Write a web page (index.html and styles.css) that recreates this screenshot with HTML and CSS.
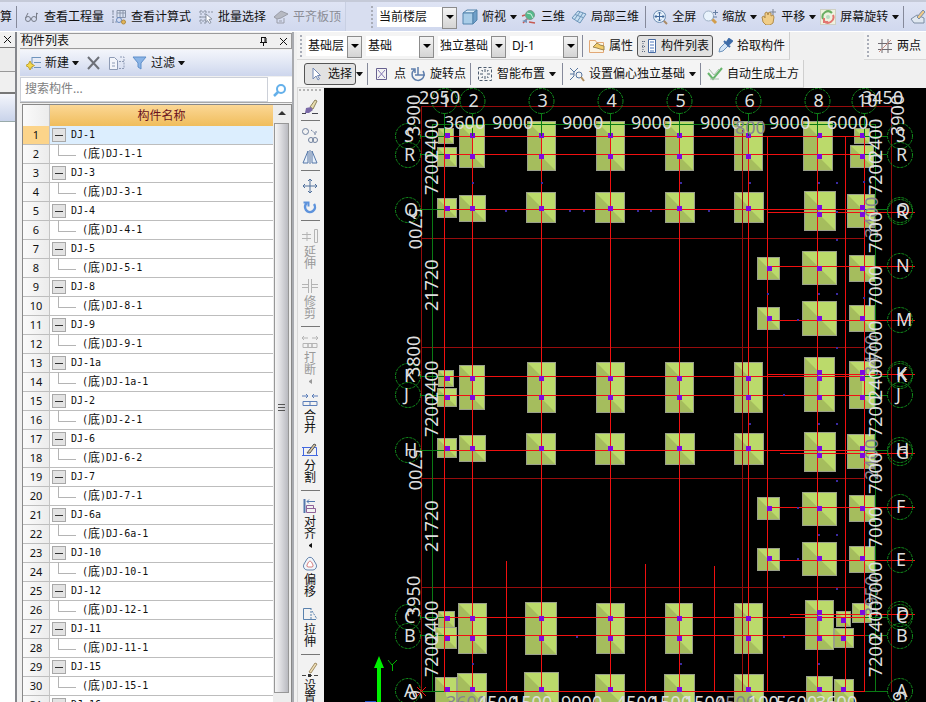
FILE: index.html
```
<!DOCTYPE html>
<html lang="zh-CN">
  <head>
    <meta charset="UTF-8" />
    <meta name="viewport" content="width=device-width, initial-scale=1.0" />
    <title>构件列表</title>
    <link rel="stylesheet" href="styles.css">
  </head>
  <body>
    <header class="topbar">
      <div class="bar bar-left">
        <button class="tool clipped">算</button>
        <span class="sep"></span>
        <button class="tool">
          <svg class="icon" viewBox="0 0 16 16" fill="none" stroke="#777c88"><circle cx="4" cy="10" r="2.5"/><circle cx="10" cy="10" r="2.5"/><path d="M1.500 9L4 4M12.500 10V4L14 5M6.500 10h1"/></svg>
          查看工程量
        </button>
        <button class="tool">
          <svg class="icon" viewBox="0 0 16 16" fill="none" stroke="#8b96ab"><path d="M2 1v13M1 3h3M1 8h3M1 13h5" stroke-dasharray="2 1"/><path d="M6 1.500h8.500v7H6zM6 4h8M9 2v6M12 2v6" fill="#d9e2f2"/><circle cx="8" cy="11" r="2.500" stroke="#6a8cc0"/><circle cx="12.500" cy="13" r="2" fill="#e2b65a" stroke="#b18a3f"/></svg>
          查看计算式
        </button>
        <button class="tool">
          <svg class="icon" viewBox="0 0 16 16" fill="none" stroke="#8a93a3"><path d="M3 1v14M7 1v14M1 3h14M1 8h7M1 12h7" stroke-dasharray="2 1"/><path d="M8 5l6 5-3 .5 2 3-1.500 1-2-3-1.500 2z" fill="#fff"/></svg>
          批量选择
        </button>
        <button class="tool" disabled>
          <svg class="icon" viewBox="0 0 16 16" fill="#b6b9c2" stroke="#9a9da8"><path d="M1 8l7-6 7 3-7 4-4 1z"/><path d="M4 10v4h7V9M6 12h3" fill="none"/></svg>
          平齐板顶
        </button>
      </div>
      <div class="bar bar-view">
        <span class="grip"></span>
        <label class="combo combo-floor"><select aria-label="楼层范围"><option>当前楼层</option></select></label>
        <button class="tool menu">
          <svg class="icon" viewBox="0 0 16 16" stroke="#5484ad"><path d="M1 4l4-3h10l-4 3z" fill="#dcecf8"/><path d="M1 4h10v11H1z" fill="#a9cde8"/><path d="M11 4l4-3v10l-4 4z" fill="#6f9fc8"/></svg>
          俯视<i class="caret"></i>
        </button>
        <button class="tool">
          <svg class="icon" viewBox="0 0 16 16" fill="none"><path d="M2 14l5-5M4 6l-3 1M8 13l6 1" stroke="#c65a52" stroke-width="1.500"/><circle cx="9" cy="6" r="4.500" fill="#54b98b" stroke="#7d9b8d"/><path d="M6 4l4 1 2 4" stroke="#d2f3df"/><path d="M1 12l5-2v4z" fill="#7794b7"/></svg>
          三维
        </button>
        <button class="tool">
          <svg class="icon" viewBox="0 0 16 16" stroke="#6b94b8" fill="#c7dff2"><path d="M1 9l6-7 8 3-6 9z"/><path d="M4 5.500l8 3M9 3l-6 8M12 4l-6 9" fill="none"/></svg>
          局部三维
        </button>
        <span class="sep"></span>
        <button class="tool">
          <svg class="icon" viewBox="0 0 16 16" fill="none"><path d="M11 11l4 4" stroke="#aa8a66" stroke-width="2"/><circle cx="7.500" cy="7.500" r="6" fill="#e6f1fb" stroke="#6e90b4"/><path d="M7.500 3v9M3 7.500h9M6 4.500L7.500 3 9 4.500M6 10.500L7.500 12 9 10.500M4.500 6L3 7.500 4.500 9M10.500 6L12 7.500 10.500 9" stroke="#42699c"/></svg>
          全屏
        </button>
        <button class="tool menu">
          <svg class="icon" viewBox="0 0 16 16" fill="none"><path d="M10 10l4 4" stroke="#d29d4b" stroke-width="3"/><circle cx="6.500" cy="7" r="5" fill="#e9f3fc" stroke="#9fb1c6"/><path d="M13.500 1v5M11 3.500h5M11 8h4" stroke="#6780a4"/></svg>
          缩放<i class="caret"></i>
        </button>
        <button class="tool menu">
          <svg class="icon" viewBox="0 0 16 16"><path d="M1 8l2-1 1 2V4l2-1 1 3 1-3 2 1v3l2-1 1 2-1 6-3 2H5l-3-3z" fill="#f0cd87" stroke="#b18c4b"/><path d="M12 0v6M9 3h6" stroke="#7c8491" fill="none"/></svg>
          平移<i class="caret"></i>
        </button>
        <button class="tool menu">
          <svg class="icon" viewBox="0 0 16 16" fill="none"><rect x=".5" y=".5" width="15" height="15" fill="#eef1df" stroke="#cfd0c4"/><path d="M3 10a5.500 5.500 0 0 1 9-6" stroke="#6aae62" stroke-width="2"/><path d="M13 6a5.500 5.500 0 0 1-9 6M4 9v4h4" stroke="#e27672" stroke-width="2"/><circle cx="8" cy="8" r="2" fill="#b8dcc0"/></svg>
          屏幕旋转<i class="caret"></i>
        </button>
        <span class="sep"></span>
        <button class="tool" aria-label="编辑">
          <svg class="icon" viewBox="0 0 16 16" stroke="#7d8da3"><path d="M1 10l6-4 7 3v5H4z" fill="#dfe7f0"/><path d="M7 8l6-7 2 2-6 7z" fill="#efc987"/></svg>
        </button>
      </div>
    </header>

    <div class="main">
      <aside class="strip">
        <div class="strip-title"><button class="close" aria-label="关闭"><svg viewBox="0 0 9 9"><path d="M1 1l7 7M8 1L1 8"/></svg></button></div>
        <div class="strip-head"></div>
        <div class="strip-tab"></div>
        <div class="strip-blue"></div>
      </aside>

      <section class="panel">
        <div class="panel-title">
          <h1>构件列表</h1>
          <button class="close" aria-label="固定"><svg viewBox="0 0 9 9"><path d="M2 .5h5M2.500 1v4M6 1v4M7 1v4M1 5.500h7M4.500 6v3"/></svg></button>
          <button class="close" aria-label="关闭"><svg viewBox="0 0 9 9"><path d="M1 1l7 7M8 1L1 8"/></svg></button>
        </div>
        <div class="panel-tools">
          <button class="tool">
            <svg class="icon" viewBox="0 0 16 16" fill="none" stroke="#6f94bd"><path d="M6 2v12M6 2.500h9M8 7.500h7M8 12.500h7"/><path d="M4 6l1.500 3 3 1.500-3 1.500L4 15l-1.500-3-3-1.500 3-1.500z" fill="#f4d94f" stroke="#bfa12f"/></svg>
            新建<i class="caret"></i>
          </button>
          <button class="tool" aria-label="删除">
            <svg class="icon" viewBox="0 0 16 16" fill="none" stroke="#6d7078" stroke-width="2"><path d="M2 2l11 12M13 2L2 14"/></svg>
          </button>
          <button class="tool" aria-label="复制">
            <svg class="icon" viewBox="0 0 16 16" fill="#f3f5fa" stroke="#8e9bb5"><path d="M.5 2.500h5l3 3v9h-8zM3 8h3M3 11h3"/><path d="M10 6.500h5v7h-5M11 2h4v4" fill="none" stroke-dasharray="2 1"/></svg>
          </button>
          <button class="tool">
            <svg class="icon" viewBox="0 0 16 16" fill="#8ab4e6" stroke="#5f8fca"><path d="M1 2h13L9 8v6l-3-2V8z"/></svg>
            过滤<i class="caret"></i>
          </button>
        </div>
        <div class="search">
          <input type="text" placeholder="搜索构件..." aria-label="搜索构件" />
          <button aria-label="搜索">
            <svg viewBox="0 0 14 14" fill="none" stroke="#64b0ea"><circle cx="8" cy="6" r="4" stroke-width="2"/><path d="M5 9l-4 4" stroke-width="2.500"/></svg>
          </button>
        </div>
        <div class="list">
          <table>
            <thead>
              <tr><th class="num"></th><th>构件名称</th></tr>
            </thead>
            <tbody id="rows"></tbody>
          </table>
          <div class="scrollbar">
            <div class="scroll-up"></div>
            <div class="thumb"></div>
          </div>
        </div>
      </section>

      <section class="workspace">
        <div class="row">
          <div class="bar2">
            <span class="grip"></span>
            <label class="combo combo-layer"><select aria-label="楼层"><option>基础层</option></select></label>
            <label class="combo"><select aria-label="构件大类"><option>基础</option></select></label>
            <label class="combo"><select aria-label="构件类型"><option>独立基础</option></select></label>
            <label class="combo"><select aria-label="构件"><option>DJ-1</option></select></label>
            <span class="sep"></span>
            <button class="tool">
              <svg class="icon" viewBox="0 0 16 16"><path d="M.5 2.500h6l1 2h7v10H.5z" fill="#fcf3e2" stroke="#e2a876"/><path d="M4 9l4-4 3 2 4 1v4l-4-1-3-1z" fill="#f3cc69" stroke="#9b854f"/></svg>
              属性
            </button>
            <button class="tool pressed">
              <svg class="icon" viewBox="0 0 16 16" fill="none" stroke="#5c6a80"><path d="M1 3.500h4M1 8.500h4M1 13.500h4M2 3v10" stroke-dasharray="1 1"/><path d="M7.500 1.500h7v13h-7z" fill="#fff" stroke="#466aa2"/><path d="M9 4h4M9 7h4M9 10h4M9 13h4" stroke="#4d79bd"/></svg>
              构件列表
            </button>
            <button class="tool">
              <svg class="icon" viewBox="0 0 16 16"><path d="M2 14l1-4 5-5 3 3-5 5z" fill="#d5e6f7" stroke="#6e93bb"/><path d="M7 3l6 6M10 4l2-3 3 2-3 3z" fill="#3e6ca8" stroke="#3e6ca8" stroke-width="2"/></svg>
              拾取构件
            </button>
          </div>
          <div class="bar2 bar-axis">
            <span class="grip"></span>
            <button class="tool">
              <svg class="icon" viewBox="0 0 16 16" fill="none" stroke="#6f6a70"><path d="M5 1v14M11 1v14M1 5.500h14M1 11.500h14"/><path d="M2 14L14 2" stroke="#c98e83"/></svg>
              两点
            </button>
          </div>
        </div>
        <div class="row">
          <div class="bar2">
            <button class="tool pressed select">
              <svg class="icon" viewBox="0 0 16 16" fill="#fff" stroke="#7289b4"><path d="M5 2v11l3-3 2 4 1.500-1-2-3.500h3z"/></svg>
              选择
            </button>
            <button class="drop" aria-label="选择方式"><i class="caret"></i></button>
            <span class="sep"></span>
            <button class="tool">
              <svg class="icon" viewBox="0 0 16 16" fill="none" stroke="#67618f"><path d="M2.500 2.500h10v11h-10z"/><path d="M4 4l7 8M11 4l-7 8" stroke="#8478b6"/></svg>
              点
            </button>
            <button class="tool">
              <svg class="icon" viewBox="0 0 16 16" fill="none" stroke="#5e7eac" stroke-width="1.500"><path d="M4 4a6 6 0 1 0 9 1M1 3h4v4M8 1v8M5 9h10"/></svg>
              旋转点
            </button>
            <span class="sep"></span>
            <button class="tool wide">
              <svg class="icon" viewBox="0 0 16 16" fill="none" stroke="#4b5a6d"><path d="M1.500 1.500h13v13h-13z" stroke-dasharray="3 2"/><path d="M8 3v3M8 10v3M3 8h3M10 8h3M4.500 4.500h1v1M11.500 4.500h-1v1M4.500 11.500h1v-1M11.500 11.500h-1v-1"/></svg>
              智能布置<i class="caret"></i>
            </button>
            <span class="sep"></span>
            <button class="tool">
              <svg class="icon" viewBox="0 0 16 16" fill="none" stroke="#54739d"><path d="M1 2l4 4v4l-4 4M5 6l4-4M5 8H1"/><circle cx="10" cy="9" r="3"/><path d="M12 11l3 4" stroke="#b08f60" stroke-width="2"/></svg>
              设置偏心独立基础<i class="caret"></i>
            </button>
            <span class="sep"></span>
            <button class="tool">
              <svg class="icon" viewBox="0 0 16 16" fill="none" stroke="#67b56c"><path d="M1 7l5 6 9-11" stroke-width="2"/><path d="M2 3l5 6 5-6M3 13h9" stroke="#a5bfa7"/></svg>
              自动生成土方
            </button>
          </div>
        </div>

        <div class="work">
          <nav class="edit-tools">
            <span class="grip-h"></span>
            <button class="vtool small" aria-label="格式刷"><svg class="icon" viewBox="0 0 16 16"><path d="M8 8l5-7 2 1-4 8z" fill="#e7dcae" stroke="#8d835d"/><path d="M4 9l5-1 2 3-4 3H3z" fill="#7b6aa8"/><path d="M0 14.500h4M10 14.500h6" stroke="#43454e"/></svg></button>
            <span class="hsep"></span>
            <button class="vtool small" aria-label="复制"><svg class="icon" viewBox="0 0 16 16" fill="none" stroke="#70819e"><circle cx="3.500" cy="3.500" r="3"/><circle cx="9" cy="12" r="2.500"/><circle cx="13" cy="12" r="2.500"/><path d="M9 2l5 4M14 3v3h-3" stroke-dasharray="2 1"/></svg></button>
            <button class="vtool small" aria-label="镜像"><svg class="icon" viewBox="0 0 16 16" fill="#e8f0fa" stroke="#5577a8"><path d="M6 2v12H1zM10 2v12h5zM8 1v14"/></svg></button>
            <span class="hsep"></span>
            <button class="vtool small" aria-label="移动"><svg class="icon" viewBox="0 0 16 16" fill="none" stroke="#50709c"><path d="M8 1v14M1 8h14M6 3l2-2 2 2M6 13l2 2 2-2M3 6L1 8l2 2M13 6l2 2-2 2"/></svg></button>
            <button class="vtool small" aria-label="旋转"><svg class="icon" viewBox="0 0 16 16" fill="none" stroke="#5e93dc" stroke-width="2.500"><path d="M5 4a5 5 0 1 0 7 1"/><path d="M1.500 3.500h5v4" stroke-width="2"/></svg></button>
            <span class="hsep"></span>
            <button class="vtool" disabled><svg class="icon" viewBox="0 0 16 16" fill="none" stroke="#b4b4b4"><path d="M0 6.500h9M0 10.500h9M5 4v9M12.500 1.500h3v13h-3z"/></svg>延伸</button>
            <button class="vtool" disabled><svg class="icon" viewBox="0 0 16 16" fill="none" stroke="#b4b4b4"><path d="M0 6.500h6M10 6.500h6M0 9.500h6M10 9.500h6M6.500 1v14M9.500 1v14"/></svg>修剪</button>
            <span class="hsep"></span>
            <button class="vtool" disabled><svg class="icon" viewBox="0 0 16 16" fill="none" stroke="#b4b4b4"><path d="M1 9.500h5v4H1zM6 9.500h4v4H6zM10 9.500h5v4h-5zM0 4h6M10 4h6M2 2L0 4l2 2M14 2l2 2-2 2"/></svg>打断<i class="caret-l"></i></button>
            <button class="vtool"><svg class="icon" viewBox="0 0 16 16" fill="none" stroke="#5a7db8"><path d="M1 9.500h14v4H1zM8 10v3M0 4h6M10 4h6M4 2l2 2-2 2M12 2l-2 2 2 2"/></svg>合并</button>
            <button class="vtool"><svg class="icon" viewBox="0 0 16 16" fill="none" stroke="#4268e0"><path d="M1.500 5.500h13v8h-13zM0 5.500h3M0 13.500h3M13 13.500h3"/><path d="M5 11l7-9 2 1-6 8z" fill="#d8c6a3" stroke="#555"/></svg>分割</button>
            <span class="hsep"></span>
            <button class="vtool"><svg class="icon" viewBox="0 0 16 16" fill="none" stroke="#5377ad"><path d="M2.500 1v14" stroke-width="2"/><path d="M5 3.500h8M7 1.500l-2 2 2 2"/><path d="M4.500 7.500h7v3h-7zM4.500 10.500h9v4h-9z" stroke="#8e6299"/></svg>对齐<i class="caret-l"></i></button>
            <button class="vtool"><svg class="icon" viewBox="0 0 16 16" fill="#f0f5fa" stroke="#6684ad"><path d="M5 3a3.500 3.500 0 0 1 6 0l3 5a4 4 0 0 1-3 6H5a4 4 0 0 1-3-6z"/><path d="M6.500 6a1.800 1.800 0 0 1 3 0l1.500 3a1.500 1.500 0 0 1-1 2H6a1.500 1.500 0 0 1-1-2z" fill="#fff" stroke="#d78080"/></svg>偏移</button>
            <button class="vtool"><svg class="icon" viewBox="0 0 16 16" fill="none" stroke="#5981ad"><path d="M9 2.500H1.500v11H14"/><path d="M9 2v11M10 5l5 8" stroke-dasharray="2 1"/></svg>拉伸</button>
            <span class="hsep"></span>
            <button class="vtool"><svg class="icon" viewBox="0 0 16 16"><path d="M7 10l6-9 2 1-6 9z" fill="#efe0b8" stroke="#a08c64"/><path d="M0 13.500h16" stroke="#444" stroke-dasharray="4 2"/><path d="M6 12h3v3H6z" fill="#333"/></svg>设置</button>
          </nav>
          <svg id="plan" class="plan"></svg>
        </div>
      </section>
    </div>

    <script src="script.js"></script>
  </body>
</html>
```
FILE: styles.css
```
* {
  box-sizing: border-box;
}

body {
  margin: 0;
  height: 100vh;
  overflow: hidden;
  display: flex;
  flex-direction: column;
  background: #f0f0f0;
  font-family: "Noto Sans", "Noto Sans CJK SC", sans-serif;
  font-size: 12px;
  line-height: 16px;
  color: #111;
}

button,
select,
input {
  font: inherit;
  color: inherit;
}

button {
  border: none;
  background: none;
  padding: 0;
}

.icon {
  width: 16px;
  height: 16px;
  flex: none;
}

.topbar {
  flex: none;
  display: flex;
  height: 32px;
  border-top: 2px solid #c5cad8;
  border-bottom: 1px solid #fff;
  background: #d8def0;
  overflow: hidden;
}

.bar {
  display: flex;
  align-items: center;
  gap: 6px;
  background: linear-gradient(#dfe4f4, #d0d8ee);
}

.bar-left {
  gap: 7px;
  padding-right: 4px;
  border-right: 1px solid #c8cfe2;
}

.bar-left .sep {
  margin-left: -3px;
}

.bar-view {
  flex: 1;
  margin-left: 25px;
}

.tool {
  display: flex;
  flex: none;
  align-items: center;
  gap: 4px;
  white-space: nowrap;
}

.tool:disabled {
  color: #8b8d96;
}

.menu {
  margin-right: -2px;
}

.caret {
  width: 7px;
  border: 3px solid transparent;
  border-top: 4px solid #111;
  border-bottom: none;
}

.sep {
  flex: none;
  width: 1px;
  height: 22px;
  background: #85899a;
}

.grip {
  flex: none;
  width: 2px;
  height: 22px;
  background: repeating-linear-gradient(#a9adb8 0 2px, transparent 2px 4px);
}

.combo {
  position: relative;
  flex: none;
  width: 68px;
  height: 20px;
}

.combo-floor {
  width: 80px;
  margin-left: -2px;
  margin-right: -1px;
}

.combo-layer {
  width: 56px;
}

.combo select {
  appearance: none;
  width: 100%;
  height: 20px;
  padding: 0 0 0 2px;
  border: none;
  border-radius: 0;
  background: #fff;
}

.combo::before {
  content: "";
  position: absolute;
  right: 0;
  top: 0;
  width: 13px;
  height: 20px;
  border: 1px solid #8c8c8c;
  background: linear-gradient(#f4f4f4, #d4d4d4);
  pointer-events: none;
}

.combo::after {
  content: "";
  position: absolute;
  right: 3px;
  top: 8px;
  border: 4px solid transparent;
  border-top-color: #000;
  border-bottom: none;
  pointer-events: none;
}

.main {
  flex: 1;
  min-height: 0;
  display: flex;
}

/* docked neighbour on the left edge */
.strip {
  flex: none;
  width: 17px;
  border-right: 2px solid #85878c;
  background: #fff;
}

.strip-title {
  display: flex;
  justify-content: flex-end;
  align-items: center;
  height: 16px;
  border-bottom: 1px solid #777;
  background: #f0f0f0;
}

.strip-head {
  height: 24px;
  background: #ececec;
  border-bottom: 1px solid #999;
}

.strip-tab {
  height: 22px;
  background: #f0f0f0;
  border-bottom: 2px solid #777;
}

.strip-blue {
  height: 28px;
  background: linear-gradient(#f4f6fc, #c9d3ea);
  border-bottom: 1px solid #9aa;
}

.close {
  width: 15px;
  height: 13px;
}

.close svg {
  display: block;
  width: 9px;
  height: 9px;
  margin: 0 auto;
  fill: none;
  stroke: #111;
}

.panel {
  flex: none;
  width: 274px;
  margin-left: 3px;
  display: flex;
  flex-direction: column;
  border-right: 2px solid #a9abb0;
}

.panel-title {
  display: flex;
  align-items: center;
  gap: 5px;
  height: 16px;
  margin: 1px 0;
  border: 1px solid #9a9a9a;
  border-left: none;
  background: #f0f0f0;
}

.panel-title h1 {
  flex: 1;
  margin: 0;
  padding-left: 1px;
  font-size: 12px;
  line-height: 14px;
  font-weight: normal;
}

.panel-tools {
  display: flex;
  align-items: center;
  gap: 7px;
  height: 26px;
  padding-left: 6px;
  background: linear-gradient(#f3f5fb, #e3e8f5 45%, #cdd6ed);
}

.panel-tools .tool {
  gap: 3px;
}

.search {
  display: flex;
  height: 26px;
  margin: 1px 0;
  background: #fff;
  border-bottom: 1px solid #a8a8a8;
}

.search input {
  flex: 1;
  min-width: 0;
  padding: 0 4px 2px;
  border: 1px solid #ccd0d8;
  outline: none;
}

.search input::placeholder {
  color: #808080;
}

.search button {
  width: 24px;
}

.search svg {
  display: block;
  width: 14px;
  height: 14px;
  margin: 0 auto;
}

.list {
  flex: 1;
  min-height: 0;
  display: flex;
  margin-left: 2px;
  border: 1px solid #888;
  border-bottom: none;
  overflow: hidden;
  background: #fff;
}

table {
  flex: 1;
  height: 0;
  border-collapse: separate;
  border-spacing: 0;
  table-layout: fixed;
}

th {
  height: 21px;
  padding: 0;
  background: linear-gradient(#fbd795, #f0bd5c);
  color: #6b1220;
  font-weight: normal;
}

td {
  height: 19px;
  padding: 0;
  border-bottom: 1px solid #bdbdbd;
  font-family: "DejaVu Sans Mono", "Noto Sans CJK SC", monospace;
  font-size: 10px;
  line-height: 18px;
}

.num {
  width: 27px;
  border-right: 1px solid #c4c4c4;
  background: linear-gradient(90deg, #fafafa, #ececec);
  text-align: center;
  font-family: "Noto Sans", sans-serif;
  font-size: 11px;
}

.node {
  display: flex;
  align-items: center;
  height: 18px;
  padding-left: 2px;
  gap: 5px;
}

.node::before {
  content: "";
  width: 12px;
  height: 12px;
  border: 1px solid #a8a8a8;
  background: linear-gradient(#333, #333) center / 8px 1px no-repeat, #e3e3e3;
}

.leaf {
  display: flex;
  align-items: center;
  height: 18px;
  padding-left: 8px;
}

.leaf::before {
  content: "";
  width: 17px;
  height: 11px;
  margin: 0 6px 8px 0;
  border: 1px solid #b4b4b4;
  border-top: none;
  border-right: none;
}

.leaf b {
  font-size: 12px;
  font-weight: normal;
}

.current td {
  background: #dceefe;
}

.current .num {
  background: #fcd48a;
}

.scrollbar {
  flex: none;
  width: 18px;
  padding: 0 1px;
  background: #ededed;
}

.scroll-up {
  width: 0;
  margin: 6px auto 8px;
  border: 4px solid transparent;
  border-top: none;
  border-bottom-color: #333;
}

.thumb {
  display: flex;
  align-items: center;
  justify-content: center;
  width: 15px;
  height: 570px;
  border: 1px solid #979797;
  background: linear-gradient(90deg, #f5f5f5, #dcdce0 45%, #b9bac0);
}

.thumb::after {
  content: "";
  width: 7px;
  height: 8px;
  background: repeating-linear-gradient(#555 0 1px, transparent 1px 3px);
}

.workspace {
  flex: 1;
  min-width: 0;
  margin-left: 3px;
  display: flex;
  flex-direction: column;
}

.row {
  flex: none;
  display: flex;
  justify-content: space-between;
  height: 28px;
}

.bar2 {
  display: flex;
  align-items: center;
  gap: 4px;
  padding: 0 4px 0 3px;
  border-right: 1px solid #cfcfcf;
  border-bottom: 1px solid #d8d8d8;
  background: #f4f4f4;
}

.bar2 .sep {
  margin-right: 2px;
}

.bar-axis {
  padding-right: 5px;
  border-right: none;
}

.bar-axis .tool {
  margin-left: 4px;
}

.pressed {
  height: 22px;
  padding: 0 3px;
  border: 1px solid #555;
  border-radius: 3px;
  background: #e2e2e2;
}

.select {
  margin-left: 4px;
}

.drop {
  margin-left: -4px;
}

.drop .caret {
  display: block;
}

.bar2 .wide {
  margin-right: 2px;
}

.work {
  flex: 1;
  min-height: 0;
  display: flex;
}

.edit-tools {
  flex: none;
  width: 27px;
  display: flex;
  flex-direction: column;
  align-items: center;
  gap: 8px;
  padding-right: 2px;
  overflow: hidden;
  border-left: 1px solid #d8d8d8;
  background: #f2f2f2;
}

.grip-h {
  flex: none;
  width: 22px;
  height: 2px;
  margin-top: 1px;
  background: repeating-linear-gradient(90deg, #b4b4b4 0 2px, transparent 2px 4px);
}

.vtool {
  flex: none;
  display: flex;
  flex-direction: column;
  align-items: center;
  gap: 2px;
  width: 16px;
  padding: 0 2px;
  font-size: 12px;
  line-height: 12px;
}

.vtool:disabled {
  color: #999;
}

.small {
  height: 15px;
}

.small + .small {
  margin-top: -2px;
}

.hsep {
  flex: none;
  width: 19px;
  height: 1px;
  margin: -2px 0 -1px;
  background: #777;
}

.caret-l {
  margin-top: 1px;
  border: 2px solid transparent;
  border-right: 3px solid currentColor;
  border-left: none;
  height: 5px;
}

.plan {
  flex: 1;
  min-width: 0;
  height: 100%;
  background: #000;
}

.plan text {
  font-family: "Noto Sans", sans-serif;
  font-size: 18px;
  fill: #dedede;
}

.plan .dim-over {
  fill: #85858f;
}

.plan line {
  shape-rendering: crispEdges;
}

.axis {
  stroke: #f01010;
}

.border {
  stroke: #960c0c;
}

.guide {
  stroke: #0a7a14;
}

.bubble {
  fill: none;
  stroke: #118a1b;
  stroke-dasharray: 3 1;
}

.pad {
  fill: #bbda6b;
  stroke: #9aa08a;
}

.slope {
  fill: #a5bd5d;
}

.column {
  fill: #7d08e0;
}

.mark {
  fill: #3a2aa0;
}

.ucs {
  fill: #00f000;
}

.ucs-y {
  fill: none;
  stroke: #00b400;
}

.ucs-x {
  stroke: #1e50c8;
  stroke-width: 2;
}
```
FILE: script.js
```
const names = ["1", "3", "4", "5", "8", "9", "1a", "2", "6", "7", "6a", "10", "12", "11", "15", "16"];
const rows = document.getElementById("rows");

rows.innerHTML = names
  .map((name, i) => {
    const child = name === "6" ? "6-2" : `${name}-1`;
    const parentRow = `<tr class="${i === 0 ? "current" : ""}"><td class="num">${i * 2 + 1}</td><td><div class="node">DJ-${name}</div></td></tr>`;
    if (i === names.length - 1) return parentRow;
    return `${parentRow}<tr><td class="num">${i * 2 + 2}</td><td><div class="leaf">(<b>底</b>)DJ-${child}</div></td></tr>`;
  })
  .join("");

// model coordinates of the visible corner
const origin = { x: 324, y: 88 };

const out = [];
const line = (cls, x1, y1, x2, y2) =>
  out.push(`<line class="${cls}" x1="${x1}" y1="${y1}" x2="${x2}" y2="${y2}"/>`);
const text = (str, x, y, angle = 0, cls = "") =>
  out.push(`<text class="${cls}" transform="translate(${x} ${y}) rotate(${angle})">${str}</text>`);

// foundation pads: x, y, width, height
const pads = [
  [438, 128, 16, 16], [437, 147, 20, 20], [437, 198, 20, 20], [438, 370, 16, 17], [437, 388, 20, 19],
  [437, 438, 20, 20], [438, 611, 17, 17], [435, 627, 22, 22], [435, 677, 22, 30],
  [459, 124, 26, 44], [459, 195, 27, 27], [459, 365, 26, 45], [459, 435, 27, 27], [458, 603, 29, 51], [457, 673, 30, 34],
  [527, 121, 29, 50], [526, 192, 30, 31], [527, 362, 29, 51], [526, 433, 30, 32], [525, 602, 32, 53], [524, 672, 35, 35],
  [596, 121, 29, 50], [595, 192, 30, 31], [596, 362, 29, 51], [595, 433, 30, 32], [596, 603, 29, 51], [595, 674, 30, 33],
  [665, 121, 29, 50], [665, 192, 30, 31], [665, 362, 29, 51], [665, 433, 30, 32], [665, 603, 28, 51], [664, 674, 31, 33],
  [734, 121, 29, 50], [734, 192, 30, 31], [734, 362, 29, 51], [734, 433, 30, 32], [734, 603, 29, 51], [734, 674, 30, 33],
  [757, 257, 23, 23], [757, 307, 23, 23], [757, 497, 23, 23], [757, 548, 23, 23],
  [803, 121, 30, 50], [804, 191, 32, 40], [802, 251, 35, 34], [802, 301, 35, 35], [804, 357, 31, 55],
  [804, 432, 32, 40], [802, 492, 35, 34], [802, 542, 35, 34], [805, 600, 29, 50], [806, 676, 27, 30],
  [854, 128, 16, 16], [850, 145, 24, 23], [847, 194, 28, 34], [849, 255, 26, 27], [849, 305, 26, 27],
  [849, 361, 26, 48], [847, 434, 28, 35], [849, 495, 26, 27], [849, 546, 26, 27], [852, 603, 20, 20],
  [836, 611, 15, 16], [834, 628, 20, 20], [834, 679, 20, 24],
];

pads.forEach(([x, y, w, h]) => {
  const m = Math.min(w, h) / 2;
  const cx = x + w / 2;
  out.push(`<rect class="pad" x="${x + 0.5}" y="${y + 0.5}" width="${w - 1}" height="${h - 1}"/>`);
  out.push(`<polygon class="slope" points="${x + 1},${y + 1} ${cx},${y + m} ${cx},${y + h - m} ${x + w - 1},${y + h - 1} ${x + 1},${y + h - 1}"/>`);
});

// outer border and secondary axes
line("border", 421.5, 106, 421.5, 692);
line("border", 891.5, 106, 891.5, 692);
line("border", 421, 106.5, 892, 106.5);
line("border", 742.5, 130, 742.5, 692);
[238.5, 347.5, 478.5, 587.5].forEach((y) => line("border", 421, y, 864, y));

// dimension lines
line("guide", 432, 124.5, 876, 124.5);
line("guide", 432.5, 124, 432.5, 692);
line("guide", 875.5, 124, 875.5, 692);

// column and row axes
[444.5, 472.5, 541.5, 610.5, 679.5, 748.5, 767.5, 817.5, 845.5, 864.5].forEach((x) =>
  line("axis", x, 136, x, 692)
);
[[506.5, 561], [645.5, 564], [714.5, 566]].forEach(([x, y]) => line("axis", x, y, x, 692));
[136.5, 154.5, 209.5, 376.5, 395.5, 450.5, 617.5, 635.5, 691.5].forEach((y) => {
  line("guide", 421, y, 444, y);
  line("guide", 864, y, 887, y);
  line("axis", 444, y, 865, y);
});
[[767, 212.5], [767, 266.5], [767, 320.5], [767, 374.5], [780, 453.5], [767, 507.5], [767, 560.5], [790, 614.5]].forEach(
  ([x, y]) => line("axis", x, y, 915, y)
);

// columns standing on the pads
const column = (x, y) => out.push(`<rect class="column" x="${x - 2}" y="${y - 2}" width="5" height="5"/>`);
const levels = [135, 156, 208, 378, 397, 448, 618, 638, 689];
[447, 472, 541, 610, 679, 748].forEach((x) => levels.forEach((y) => column(x, y)));
[135, 156, 207, 214, 268, 318, 372, 378, 397, 448, 455, 508, 558, 612, 618, 638, 689].forEach((y) => column(819, y));
[135, 156, 207, 214, 268, 318, 372, 378, 397, 448, 455, 508, 558, 612].forEach((y) => column(862, y));
[268, 318, 508, 558].forEach((y) => column(769, y));
[620, 638, 689].forEach((y) => column(843, y));

[
  [472, 182], [541, 182], [680, 182], [749, 182], [818, 182], [836, 182], [863, 181], [836, 211], [836, 239],
  [767, 293], [818, 293], [836, 293], [863, 297], [797, 319], [836, 347], [783, 394], [749, 423], [818, 423],
  [836, 423], [836, 480], [797, 507], [818, 534], [836, 534], [797, 558], [836, 588], [783, 636], [576, 636],
  [472, 663], [680, 663], [818, 663], [505, 210], [569, 210], [583, 210], [637, 210], [650, 210], [708, 210],
].forEach(([x, y]) => out.push(`<rect class="mark" x="${x}" y="${y}" width="2" height="2"/>`));

// grid bubbles
const bubble = (x, y) => out.push(`<circle class="bubble" cx="${x}" cy="${y}" r="12.5"/>`);
[["1", 444.5], ["2", 472.5], ["3", 541.5], ["4", 610.5], ["5", 679.5], ["6", 748.5], ["8", 817.5]].forEach(([s, x]) => {
  bubble(x, 101);
  line("guide", x, 113, x, 136);
  text(s, x - 4, 107);
});
bubble(864.5, 101);
line("guide", 864.5, 113, 864.5, 136);
text("10", 857, 107);

[["S", 136], ["R", 155], ["Q", 210], ["K", 376], ["J", 395], ["H", 450], ["C", 617], ["B", 636], ["A", 691]].forEach(([s, y]) => {
  bubble(408, y);
  text(s, 404, y + 6);
});
[
  ["S", 136], ["R", 155], ["Q", 210], ["R", 212], ["N", 266], ["M", 320], ["K", 374], ["K", 376], ["J", 395],
  ["H", 450], ["G", 453], ["F", 507], ["E", 560], ["D", 614], ["C", 617], ["B", 636], ["A", 691],
].forEach(([s, y]) => {
  bubble(900, y);
  text(s, 896, y + 6);
});

// horizontal dimensions
text("2950", 419, 104);
text("3450", 862, 104);
[["3600", 444], ["9000", 492], ["9000", 562], ["9000", 631], ["9000", 700], ["9000", 769], ["6000", 827]].forEach(([s, x]) =>
  text(s, x, 129)
);
text("800", 735, 134, 0, "dim-over");
text("3600", 446, 709, 0, "dim-over");
text("4500", 715, 709, 0, "dim-over");
[["4500", 477], ["1500", 511], ["9000", 561], ["4500", 616], ["1500", 650], ["1500", 684], ["100", 748], ["5600", 776], ["3600", 816]].forEach(
  ([s, x]) => text(s, x, 709)
);

// vertical dimensions
[["3900", 136], ["3800", 377], ["3950", 617]].forEach(([s, y]) => text(s, 420, y, -90));
[["2400", 160], ["7200", 195], ["21720", 311], ["2400", 402], ["7200", 437], ["21720", 552], ["2400", 642], ["7200", 677]].forEach(
  ([s, y]) => text(s, 438, y, -90)
);
text("5700", 409, 208, 90);
text("5700", 409, 449, 90);
text("6", 409, 690, 90);

[["3400", 238], ["3400", 376], ["2400", 480], ["3950", 617]].forEach(([s, y]) => text(s, 878, y, -90, "dim-over"));
text("3900", 904, 136, -90);
[
  ["2400", 160], ["7200", 195], ["7000", 253], ["7000", 307], ["7000", 362], ["2400", 400], ["7200", 437],
  ["7000", 494], ["7000", 548], ["7000", 603], ["2400", 642], ["7200", 677],
].forEach(([s, y]) => text(s, 882, y, -90));
text("6", 893, 691, 90);

// coordinate system marker
out.push(`<path class="ucs" d="M377 702v-34h-3l5-12 5 12h-3v34z"/>`);
out.push(`<path class="ucs-y" d="M388 660l4 5 5-5M392.500 665v6"/>`);
line("ucs-x", 365, 702, 376, 702);
line("axis", 417, 687, 426, 696);
line("axis", 426, 687, 417, 696);

document.getElementById("plan").innerHTML =
  `<g transform="translate(${-origin.x} ${-origin.y})">${out.join("")}</g>`;
```
